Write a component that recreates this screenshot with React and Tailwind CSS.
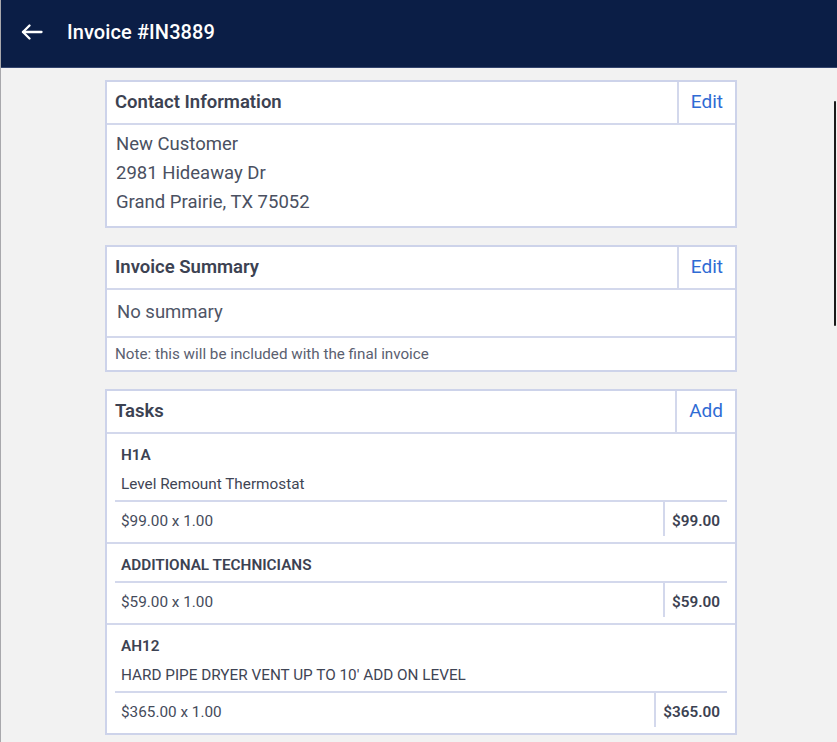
const tasks = [
  { code: 'H1A', desc: 'Level Remount Thermostat', rate: '$99.00 x 1.00', total: '$99.00' },
  { code: 'ADDITIONAL TECHNICIANS', desc: null, rate: '$59.00 x 1.00', total: '$59.00' },
  { code: 'AH12', desc: "HARD PIPE DRYER VENT UP TO 10' ADD ON LEVEL", rate: '$365.00 x 1.00', total: '$365.00' },
];

function BackArrow() {
  return (
    <svg width="22" height="16" viewBox="0 0 22 16" fill="none" stroke="currentColor" strokeWidth="2.3" strokeLinecap="round" strokeLinejoin="round">
      <path d="M20.5 8H2" />
      <path d="M8.5 1.5L2 8l6.5 6.5" />
    </svg>
  );
}

function CardHeader({ title, action }) {
  return (
    <div className="flex h-[43px] border-b-2 border-[#d3d8ec]">
      <div className="flex-1 flex items-center pl-[8px] text-[18.5px] font-semibold text-[#3c4252]">{title}</div>
      {action && (
        <div className="flex items-center border-l-2 border-[#d3d8ec] px-[12px] text-[19px] text-[#2f6bd4]">
          {action}
        </div>
      )}
    </div>
  );
}

function Card({ children }) {
  return <div className="bg-white border-2 border-[#cdd3ea]">{children}</div>;
}

export default function App() {
  return (
    <div className="relative min-h-[742px] bg-[#f2f2f2] font-['Roboto',sans-serif] border-l border-[#a8a8ac]">
      <div className="flex items-center h-[68px] pb-[4px] bg-[#0b1e46] border-b border-[#34456e] text-white">
        <div className="w-[66px] pl-[20px]">
          <BackArrow />
        </div>
        <h1 className="text-[20px] font-medium tracking-[0.1px]">Invoice #IN3889</h1>
      </div>

      <div className="w-[632px] ml-[104px] pt-[12px] pb-[8px] flex flex-col gap-[17px]">
        <Card>
          <CardHeader title="Contact Information" action="Edit" />
          <div className="pl-[9px] pt-[5px] pb-[9px] text-[18.5px] leading-[29px] text-[#4a5061]">
            <div>New Customer</div>
            <div>2981 Hideaway Dr</div>
            <div>Grand Prairie, TX 75052</div>
          </div>
        </Card>

        <Card>
          <CardHeader title="Invoice Summary" action="Edit" />
          <div className="h-[48px] flex items-center pl-[10px] border-b-2 border-[#d3d8ec] text-[18.5px] text-[#4f5566]">
            No summary
          </div>
          <div className="h-[32px] flex items-center pl-[8px] text-[15.2px] text-[#5a6070]">
            Note: this will be included with the final invoice
          </div>
        </Card>

        <Card>
          <CardHeader title="Tasks" action="Add" />
          {tasks.map((t, i) => (
            <div key={t.code} className={`px-[8px] pb-[6px] ${i < tasks.length - 1 ? 'border-b-2 border-[#d3d8ec]' : ''}`}>
              <div className="px-[6px] pt-[11px] pb-[6px] border-b-2 border-[#d3d8ec]">
                <div className="text-[15.3px] leading-[20px] font-semibold text-[#3c4252]">{t.code}</div>
                {t.desc && <div className="mt-[9px] text-[15.3px] leading-[20px] text-[#3f4555]">{t.desc}</div>}
              </div>
              <div className="flex h-[34px]">
                <div className="flex-1 flex items-center pt-[4px] pl-[6px] text-[15.3px] text-[#454b5b]">{t.rate}</div>
                <div className="flex items-center pt-[4px] border-l-2 border-[#d3d8ec] pl-[7px] pr-[7px] text-[15.3px] font-semibold text-[#3c4252]">
                  {t.total}
                </div>
              </div>
            </div>
          ))}
        </Card>
      </div>

      <div className="absolute right-[1px] top-[101px] w-[2px] h-[225px] rounded-full bg-[#1a1a1a]" />
    </div>
  );
}
